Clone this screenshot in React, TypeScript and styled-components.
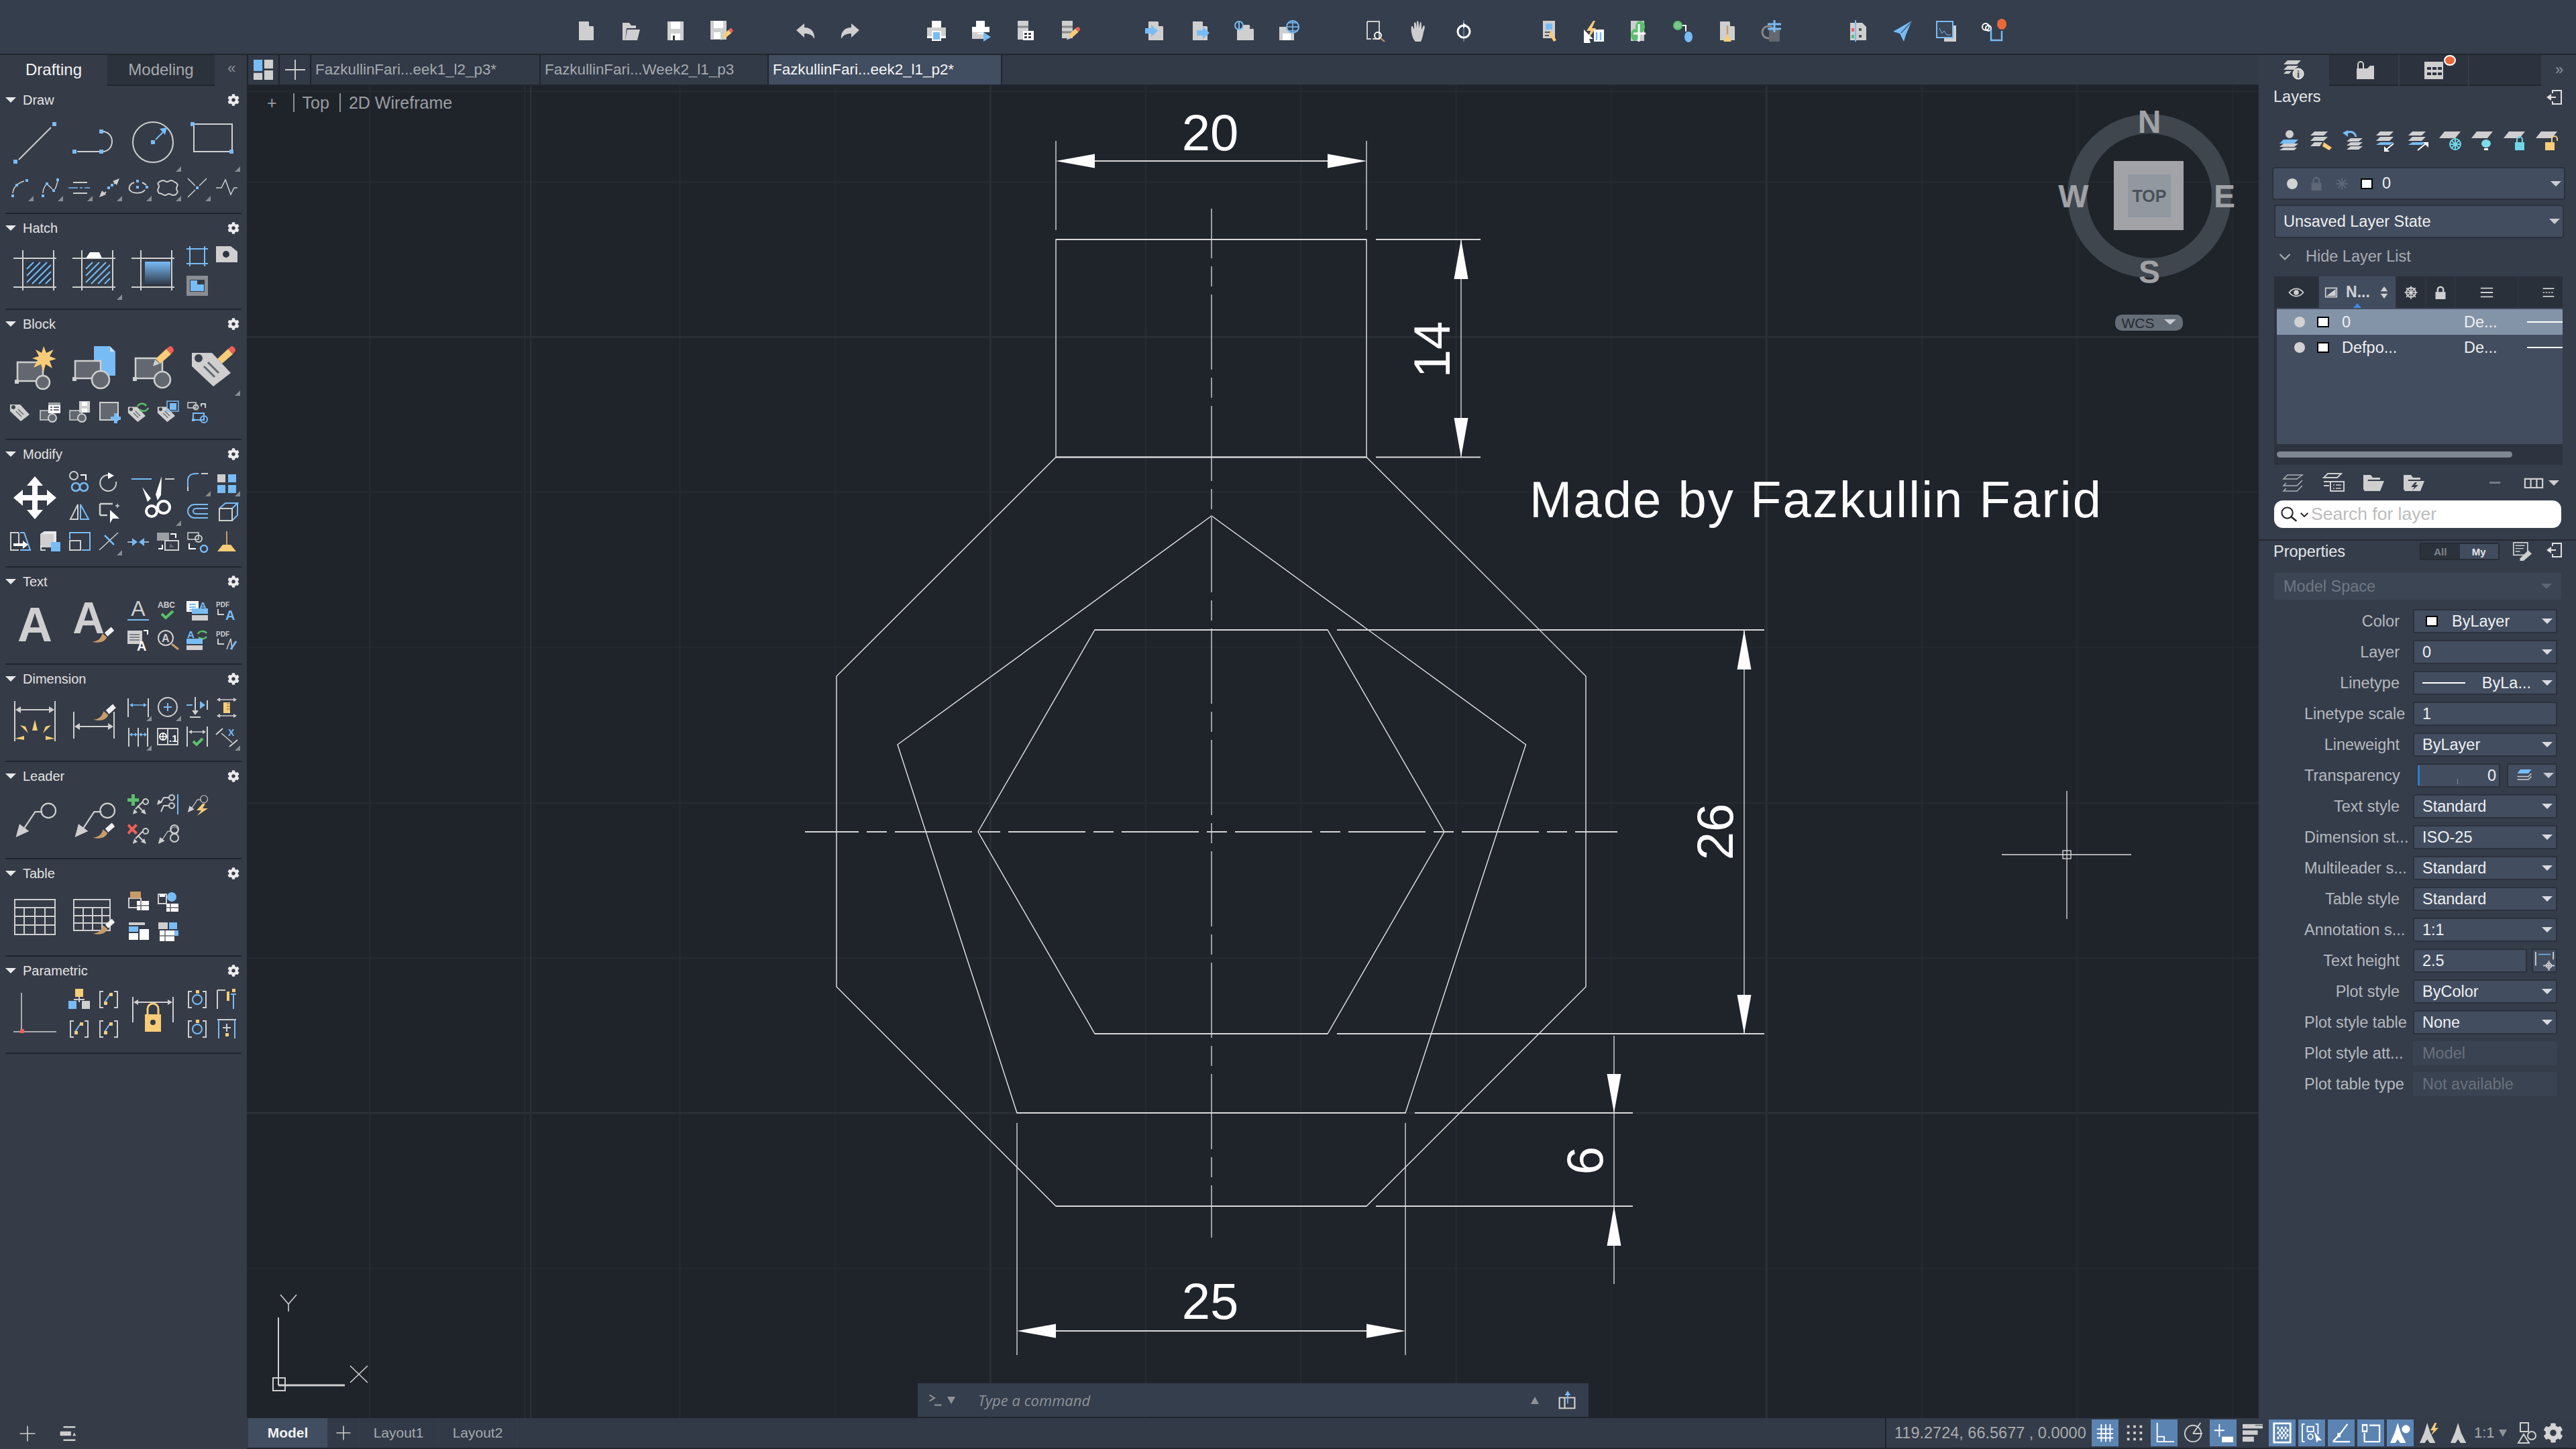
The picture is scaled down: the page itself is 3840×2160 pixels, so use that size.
import React from 'react';
import styled, { createGlobalStyle } from 'styled-components';
import { FaCog } from 'react-icons/fa';

const GR = '#cfcfcf';
const BL = '#78bcf5';
const OR = '#f8cc78';
const RD = '#ee5f58';
const GN = '#5ac06c';
const WH = '#ffffff';
const DK = '#636870';
const BR = '#c89c68';

const Ln = (d: string, c = GR, w = 2) => <path d={d} fill="none" stroke={c} strokeWidth={w} />;
const Fi = (d: string, c = GR) => <path d={d} fill={c} />;
const Bx = (x: number, y: number, w: number, h: number, c = GR) => <rect x={x} y={y} width={w} height={h} fill={c} />;
const Rg = (cx: number, cy: number, r: number, c = GR, w = 2, f = 'none') => (
  <circle cx={cx} cy={cy} r={r} stroke={c} strokeWidth={w} fill={f} />
);
const Tx = (x: number, y: number, s: string, size: number, c = GR) => (
  <text x={x} y={y} fontSize={size} fontWeight={700} fill={c} fontFamily="Liberation Sans, sans-serif">
    {s}
  </text>
);
const Brush = (x = 0, y = 0, k = 1) => (
  <g transform={`translate(${x} ${y}) scale(${k})`}>
    {Fi('M2 24C10 24 14 20 16 13L22 18C20 24 12 27 2 24Z', BR)}
    {Fi('M19 12L28 4L32 9L23 17Z', '#f0f0f0')}
  </g>
);
const Pencil = (x = 0, y = 0, k = 1) => (
  <g transform={`translate(${x} ${y}) scale(${k})`}>
    {Fi('M0 30L3 20L10 26Z', GR)}
    {Fi('M4 19L20 4L27 12L11 26Z', OR)}
    {Fi('M20 4L25 0C29 0 31 4 31 7L27 12Z', RD)}
  </g>
);
const Tag = (k = 1, x = 0, y = 0) => (
  <g transform={`translate(${x} ${y}) scale(${k})`}>
    {Fi('M1 5H16L30 20L17 30L1 15Z')}
    {Rg(6, 9, 2, '#3a414d', 2, '#3a414d')}
    {Ln('M10 15L18 23M13 12L21 20', DK, 1.5)}
  </g>
);
const Lead = (k = 1, x = 0, y = 0, c = GR) => (
  <g transform={`translate(${x} ${y}) scale(${k})`}>
    {Ln('M8 24L18 9H24', c, 1.2)}
    <circle cx="29" cy="8" r="6" stroke={c} strokeWidth="1.2" fill="none" />
    {Fi('M2 30L5 19L13 25Z', c)}
  </g>
);
const Doc = () => Fi('M5 2H19L27 10V30H5Z');
const DocFold = () => (
  <>
    {Doc()}
    {Fi('M20 2L27 9H20Z', '#353e4c')}
  </>
);

const ribbon: Record<string, React.ReactNode> = {
  line: <>{Ln('M8 56L56 8')}{Bx(0, 56, 6, 6, BL)}{Bx(58, 0, 6, 6, BL)}</>,
  pline: <>{Ln('M7 44H40M44 14C64 14 64 44 44 44')}{Bx(0, 41, 6, 6, BL)}{Bx(40, 41, 6, 6, BL)}{Bx(40, 11, 6, 6, BL)}</>,
  circle: <>{Rg(32, 30, 30)}{Bx(29, 27, 6, 6, BL)}{Ln('M36 26L50 12', BL)}{Fi('M42 10L53 8L50 19Z', BL)}</>,
  rect: <>{Ln('M5 3H62V44H5V5')}{Bx(0, 0, 6, 6, BL)}{Bx(58, 41, 6, 6, BL)}</>,
  arc: <>{Ln('M5 24C6 15 12 9 22 6', GR, 1.5)}{Bx(3, 26, 4, 4, BL)}{Bx(9, 10, 4, 4, BL)}{Bx(24, 3, 4, 4, BL)}</>,
  spline: <>{Ln('M6 24C6 18 8 14 12 10L20 18M24 18C26 14 27 10 28 6', GR, 1.5)}{Bx(4, 26, 4, 4, BL)}{Bx(10, 8, 4, 4, BL)}{Bx(20, 18, 4, 4, BL)}{Bx(26, 2, 4, 4, BL)}</>,
  xline: <>{Ln('M7 8H28M7 24H28', GR, 2)}{Ln('M0 16H14M17 16H21M24 16H32', BL, 1.5)}</>,
  ray: <>{Ln('M8 26L12 22M24 10L28 6', GR, 2)}{Fi('M2 30L6 20L12 26Z')}{Fi('M22 6L32 2L28 12Z')}{Bx(14, 14, 4, 4, BL)}{Bx(19, 10, 4, 4, BL)}</>,
  ellipse: <>{Ln('M10 8C3 10 1 17 4 20C8 25 22 25 26 19', GR, 2)}{Ln('M22 8C24 9 26 10 28 12', GR, 2)}{Bx(13, 4, 4, 4, BL)}{Bx(13, 13, 4, 4, BL)}{Bx(27, 13, 4, 4, BL)}</>,
  cloud: <path d="M6 6Q9 4 12 6T18 6T24 6T28 8Q32 11 30 14T30 20T28 26Q24 28 21 26T15 26T9 26T3 24Q0 20 2 17T2 11T6 6Z" fill="none" stroke={GR} strokeWidth="2" />,
  xpt: <>{Ln('M2 2L13 13M30 2L19 13M13 19L2 30', GR, 1.5)}{Bx(14, 14, 4, 4, BL)}</>,
  zig: <>{Ln('M0 16H8L14 4L22 26L27 16H32', GR, 1.5)}</>,
  hatch: <>{Ln('M14 0V60M60 0V60M0 12H64M0 55H64', GR, 2)}{Bx(20, 18, 36, 32, '#2b3645')}{Ln('M20 28L30 18M20 38L40 18M20 48L50 18M28 50L56 22M38 50L56 32M48 50L56 42', BL, 2)}</>,
  hatchEdit: <>{Ln('M14 0V60M60 0V60M0 12H64M0 55H64', GR, 2)}{Ln('M20 28L30 18M20 38L40 18M20 48L50 18M28 50L56 22M38 50L56 32M48 50L56 42', BL, 2)}{Fi('M20 12L26 3H40L44 12Z', WH)}</>,
  gradient: <>{Ln('M14 0V60M60 0V60M0 12H64M0 55H64', GR, 2)}<rect x="20" y="17" width="38" height="36" fill="url(#hatchGrad)" /></>,
  boundary: <>{Ln('M5 0V30M27 0V30M0 4H32M0 26H32', BL, 2)}</>,
  note: <>{Fi('M0 0H22L32 8V24H0Z')}{Rg(15, 12, 4, '#2e3440', 2, '#2e3440')}</>,
  region: <>{Bx(0, 0, 32, 30, '#8a8d92')}{Bx(5, 6, 22, 18, '#353c48')}{Fi('M6 7H16V13H26V23H6Z', BL)}</>,
  blkNew: <>{Fi('M6 24H44V52H6Z', DK)}{Ln('M6 24H44V52H6Z', GR, 2.5)}{Rg(44, 54, 10, GR, 2.5, DK)}{Bx(2, 50, 6, 6)}{Fi('M45 0L49 10L60 5L54 15L64 19L54 22L58 33L48 27L45 38L41 27L30 32L36 21L28 18L38 15L33 5L42 10Z', OR)}</>,
  blkIns: <>{Fi('M32 0H56L64 8V44H48L32 26Z', BL)}{Fi('M56 1L63 8H56Z', '#c9e2f8')}{Fi('M4 22H42V48H4Z', DK)}{Ln('M4 22H42V48H4Z', GR, 2.5)}{Rg(42, 50, 13, GR, 2.5, DK)}{Bx(0, 46, 6, 6)}</>,
  blkEdit: <>{Fi('M6 18H46V48H6Z', DK)}{Ln('M6 18H46V48H6Z', GR, 2.5)}{Rg(46, 50, 12, GR, 2.5, DK)}{Bx(2, 46, 6, 6)}{Pencil(32, 0)}</>,
  tagEdit: <>{Tag(2, 0, 0)}{Pencil(36, 0)}</>,
  tag: Tag(1, 0, 0),
  blkAttr: <>{Fi('M2 14H20V28H2Z', DK)}{Ln('M2 14H20V28H2Z', GR, 1.5)}{Rg(20, 25, 6, GR, 2, DK)}{Fi('M14 2H32V18H14Z', WH)}{Bx(14, 2, 18, 4, '#9fa3a8')}{Bx(17, 8, 3, 2, DK)}{Bx(22, 8, 8, 2, DK)}{Bx(17, 12, 3, 2, DK)}{Bx(22, 12, 8, 2, DK)}</>,
  blkSave: <>{Fi('M2 14H20V28H2Z', DK)}{Ln('M2 14H20V28H2Z', GR, 1.5)}{Rg(20, 25, 6, GR, 2, DK)}{Fi('M16 0H32V17H16Z')}{Bx(20, 1, 8, 6, WH)}{Bx(20, 11, 8, 6, WH)}</>,
  addRect: <>{Fi('M3 2H30V28H3Z', DK)}{Ln('M3 2H30V28H3Z', GR, 2)}{Fi('M24 18H29V23H34V28H29V33H24V28H19V23H24Z', BL)}</>,
  tagSync: <>{Tag(0.9, 0, 4)}{Ln('M15 8C17 3 25 2 28 7M31 10C28 16 21 16 18 12', GN, 2.5)}</>,
  tagGroup: <>{Tag(0.9, 0, 4)}{Bx(19, 3, 10, 10, BL)}{Ln('M15 0H32V15H15Z', BL, 1.5)}</>,
  blkRep: <>{Ln('M2 2H14V10H2Z', GR, 1.5)}{Rg(14, 9, 3.5)}{Ln('M22 8V4H28V10', WH, 1.5)}{Ln('M10 18H26V28H10Z', BL, 2)}{Rg(26, 27, 5, BL)}{Bx(8, 26, 4, 4, BL)}</>,
  move: <>{Fi('M32 0L44 14H36V28H50V20L64 32L50 44V36H36V50H44L32 64L20 50H28V36H14V44L0 32L14 20V28H28V14H20Z', WH)}</>,
  copy: <>{Rg(8, 5, 6)}{Ln('M18 4H26V12', WH, 2)}{Rg(11, 22, 6, BL, 2.5)}{Rg(23, 22, 6, BL, 2.5)}</>,
  rotate: <>{Ln('M16 4A12 12 0 1 0 27 14', GR, 2)}{Fi('M15 0L24 5L15 10Z', WH)}</>,
  trim: <>{Ln('M0 4H30', BL, 2)}{Ln('M50 4H64', GR, 2)}{Fi('M16 16L29 33L24 38Z', WH)}{Fi('M45 0L44 28L39 36L36 27Z', WH)}{Rg(30, 52, 8, WH, 4)}{Rg(48, 46, 9, WH, 4)}</>,
  fillet: <>{Ln('M2 28V12C2 6 6 2 14 2H18', BL, 2)}{Ln('M22 2H32', GR, 2)}{Ln('M2 22V28', GR, 2)}</>,
  array: <>{Bx(2, 3, 12, 12)}{Bx(18, 3, 12, 12, BL)}{Bx(2, 19, 12, 12, BL)}{Bx(18, 19, 12, 12, BL)}</>,
  mirror: <>{Ln('M14 4L3 26H14Z')}{Ln('M18 4L30 26H18Z', BL)}</>,
  selStretch: <>{Ln('M3 3H22M3 3V20M3 20H14', GR, 2.5)}{Fi('M18 12L32 25L22 25L18 32Z', WH)}{Ln('M26 6H32M29 3V9', GR, 1.5)}</>,
  offset: <>{Ln('M32 4H12A8 8 0 0 0 12 24H32', BL, 2)}{Ln('M32 10H14A3 3 0 0 0 14 18H32', BL, 2)}</>,
  box3d: <>{Ln('M5 10H24V28H5ZM5 10L14 2H32L24 10M32 2V20L24 28', BL, 2)}{Ln('M5 10H24V28H5Z', GR, 2)}</>,
  stretch: <>{Ln('M14 2H2V28H14M14 2V18', GR, 2)}{Fi('M6 18H20V14L28 20L20 26V22H6Z', WH)}{Ln('M16 2H22L31 28H16', BL, 2)}</>,
  alignCube: <>{Fi('M2 4H22V24H2Z')}{Fi('M2 4L8 0H26V16L22 24V4Z', '#e8e8e8')}{Bx(18, 16, 14, 14, BL)}{Ln('M3 22V28H10', WH, 1.5)}</>,
  scale: <>{Ln('M2 12V2H32V28H20', BL, 2)}{Ln('M2 14H18V28H2Z')}</>,
  breakline: <>{Ln('M2 28L30 2', GR, 1.5)}{Ln('M10 6L24 20', BL, 2.5)}</>,
  join: <>{Ln('M0 16H9M23 16H32', GR, 1.5)}{Fi('M7 10L15 16L7 22Z', BL)}{Fi('M25 10L17 16L25 22Z', BL)}{Ln('M4 16H10M22 16H28', BL, 2)}</>,
  replace: <>{Bx(0, 2, 18, 12, '#9b9ea3')}{Ln('M20 4H28V10', WH, 2)}{Ln('M12 14H32V28H12Z', GR, 2)}{Fi('M18 24L26 24L20 18Z', DK)}{Ln('M2 26H8V20', WH, 2)}</>,
  match: <>{Ln('M2 2H18V12H2Z', GR, 1.5)}{Rg(18, 11, 5, GR, 2)}{Ln('M4 18V26H14', WH, 2)}{Rg(26, 26, 5, BL, 2.5)}</>,
  broom: <>{Bx(15, 0, 2, 20, BR)}{Fi('M10 20H22L30 30H2Z', OR)}</>,
  bigA: <text x="32" y="56" textAnchor="middle" fontSize="72" fontWeight="700" fill={GR} fontFamily="Liberation Sans, sans-serif">A</text>,
  brushA: <>{<text x="24" y="44" textAnchor="middle" fontSize="66" fontWeight="700" fill={GR} fontFamily="Liberation Sans, sans-serif">A</text>}{Brush(27, 30, 1.1)}</>,
  underA: <>{<text x="16" y="24" textAnchor="middle" fontSize="32" fill={GR} fontFamily="Liberation Sans, sans-serif">A</text>}{Bx(0, 29, 32, 2, BL)}</>,
  abc: <>{Tx(1, 12, 'ABC', 12)}{Ln('M7 21L13 27L24 17', GN, 4)}</>,
  listA: <>{Bx(0, 2, 18, 16, WH)}{Ln('M4 7H14M4 11H14M4 15H14', BL, 2)}{Tx(19, 14, 'A', 15, BL)}{Bx(8, 13, 24, 8, BL)}{Bx(8, 23, 24, 8)}</>,
  pdfA: <>{Tx(0, 11, 'PDF', 10)}{Ln('M3 14V22H12', WH, 1.5)}{Tx(14, 30, 'A', 20, BL)}</>,
  textA: <>{Bx(0, 2, 22, 20)}{Ln('M3 8H18M3 12H18M3 16H18', DK, 1.5)}{Ln('M24 2H30V8', WH, 2)}{Tx(14, 32, 'A', 20, WH)}</>,
  findA: <>{Rg(13, 13, 11)}{Tx(7, 19, 'A', 16)}{Ln('M22 22L32 30', BR, 3)}</>,
  syncA: <>{Tx(1, 13, 'A', 15, BL)}{Ln('M17 7C19 2 27 2 30 6M30 11C27 15 22 15 18 12', GN, 2.5)}{Bx(0, 14, 24, 8, BL)}{Bx(0, 24, 24, 7)}</>,
  pdfTool: <>{Tx(0, 11, 'PDF', 10)}{Ln('M3 14V22H12', WH, 1.5)}{Ln('M16 30L22 14L24 30', GR, 1.5)}{Ln('M22 30L30 18', BL, 3)}</>,
  dimNew: <>{Ln('M2 0V60M62 0V60', GR, 2)}{Ln('M8 13H56', GR, 2)}{Fi('M3 13L11 8V18Z')}{Fi('M61 13L53 8V18Z')}{Fi('M28 44L32 28L36 44Z', OR)}{Fi('M10 36L18 38L22 48Z', OR)}{Fi('M44 48L48 38L56 36Z', OR)}{Fi('M2 56L16 52V58Z', OR)}{Fi('M62 56L48 52V58Z', OR)}</>,
  dimBrush: <>{Ln('M2 16V56M62 16V56', GR, 2)}{Ln('M8 38H56', GR, 2)}{Fi('M3 38L11 33V43Z')}{Fi('M61 38L53 33V43Z')}{Brush(28, 0, 1.15)}</>,
  dimLin: <>{Ln('M1 2V30M31 2V30', GR, 2)}{Ln('M5 12H27', BL, 1.5)}{Fi('M3 12L8 9V15Z', BL)}{Fi('M29 12L24 9V15Z', BL)}</>,
  dimRad: <>{Rg(16, 15, 14)}{Ln('M10 15H22M16 9V21', BL, 2)}</>,
  dimBase: <>{Ln('M0 12H9M20 12H26', BL, 2)}{Fi('M20 6L28 12L20 18Z', BL)}{Ln('M31 5V19', GR, 2)}{Ln('M13 0V20M5 30H21', GR, 2)}{Fi('M8 20H18L13 27Z')}</>,
  dimRuler: <>{Ln('M3 4H29M3 28H29', GR, 1.5)}{Fi('M1 4L6 1V7ZM31 4L26 1V7ZM1 28L6 25V31ZM31 28L26 25V31Z')}{Bx(11, 8, 10, 16, OR)}{Ln('M16 10H21M16 14H21M16 18H21', '#8a6a30', 1)}</>,
  dimCont: <>{Ln('M2 2V30M16 2V30M30 2V30', GR, 2)}{Ln('M5 12H13M19 12H27', BL, 1.5)}{Fi('M3 12L7 9V15ZM15 12L11 9V15ZM17 12L21 9V15ZM29 12L25 9V15Z', BL)}</>,
  tolerance: <>{Ln('M1 3H31V27H1ZM16 3V27', GR, 2)}{Rg(9, 15, 5, WH, 2)}{Ln('M3 15H15M9 9V21', WH, 1.5)}{Tx(18, 23, '.1', 15, WH)}</>,
  dimChk: <>{Ln('M1 0V30M31 0V30', GR, 2)}{Ln('M5 8H27', GR, 1.5)}{Fi('M3 8L8 5V11ZM29 8L24 5V11Z')}{Ln('M10 22L15 27L24 18', GN, 4)}</>,
  dimX: <>{Ln('M0 12L10 3M20 30L32 20', GR, 2)}{Ln('M8 10L24 24', GR, 1.5)}{Tx(18, 14, 'X', 14, BL)}</>,
  lead: Lead(1.8, 0, 4),
  leadBrush: <>{Lead(1.8, 0, 4)}{Brush(28, 32, 1.1)}</>,
  leadAdd: <>{Fi('M6 0H11V6H17V11H11V17H6V11H0V6H6Z', GN)}{Ln('M16 18L22 12H24', GR, 2)}{Rg(27, 11, 4)}{Ln('M12 22L16 18L24 26', GR, 2)}{Fi('M8 30L10 22L15 27Z')}{Fi('M28 30L20 27L25 22Z')}</>,
  leadDel: <>{Fi('M2 0L7 5L12 0L15 3L10 8L15 13L12 16L7 11L2 16L0 13L4 8L0 3Z', RD)}{Ln('M16 18L22 12H24', GR, 2)}{Rg(27, 11, 4)}{Ln('M12 22L16 18L24 26', GR, 2)}{Fi('M8 30L10 22L15 27Z')}{Fi('M28 30L20 27L25 22Z')}</>,
  leadAlign: <>{Ln('M6 12L10 5H18M6 26L10 17H18', GR, 2)}{Rg(22, 5, 4)}{Rg(22, 17, 4)}{Ln('M31 0V30', BL, 2)}{Fi('M0 16L2 8L8 12Z')}</>,
  leadBolt: <>{Lead(0.9, 0, 0)}{Fi('M24 14L15 24H22L16 32L32 21H24L28 14Z', OR)}</>,
  leadCol: <>{Lead(0.9, 0, 3)}{Rg(26, 8, 6)}{Rg(26, 21, 6)}</>,
  table: <>{Ln('M2 6H62V58H2ZM2 18H62M2 31H62M2 44H62M16 18V58M32 18V58M47 18V58', GR, 2)}</>,
  tableBrush: <>{Ln('M2 6H56V52H2ZM2 18H56M2 30H56M2 41H56M16 18V52M30 18V52M44 18V52', GR, 2)}{Brush(28, 30, 1.1)}</>,
  dataExt: <>{Ln('M2 10H20V24H2Z', GR, 2)}{Bx(4, 0, 16, 10, BR)}{Fi('M14 14H32V28H14Z', WH)}{Ln('M20 14V28M14 21H32', DK, 1.5)}</>,
  dataLink: <>{Rg(22, 8, 6, BL, 2, BL)}{Ln('M2 4H14V18H2Z', GR, 2)}{Bx(4, 4, 8, 4, WH)}{Fi('M14 18H32V30H14Z', WH)}{Ln('M20 18V30M14 24H32', DK, 1.5)}</>,
  dataOut: <>{Bx(2, 2, 24, 4, GR)}{Bx(2, 8, 14, 8, BL)}{Bx(2, 18, 14, 10, WH)}{Bx(18, 12, 14, 16, WH)}</>,
  dataIn: <>{Bx(2, 2, 14, 10, GR)}{Bx(18, 2, 12, 10, BL)}{Fi('M4 14H26V30H4Z', WH)}{Ln('M12 14V30M4 22H26', DK, 1.5)}{Bx(26, 14, 6, 8, BL)}</>,
  paramLine: <>{Ln('M12 0V56M0 58H64', GR, 1.5)}{Fi('M10 54H16V60H10Z', RD)}</>,
  paramFlow: <>{Bx(10, 0, 12, 12, OR)}{Ln('M8 16H24M16 12V20', GR, 2)}{Bx(0, 18, 12, 12, BL)}{Bx(20, 18, 12, 12, GR)}</>,
  paramBracket: <>{Ln('M8 4H3V28H8M24 4H29V28H24', GR, 2)}{Ln('M10 20L18 8', BL, 2)}{Bx(9, 19, 5, 5, OR)}{Bx(17, 6, 5, 5, OR)}</>,
  paramDim: <>{Ln('M2 6V44M62 6V44', GR, 2)}{Ln('M6 14H58', GR, 2)}{Fi('M3 14L10 10V18ZM61 14L54 10V18Z')}{Fi('M20 32H44V58H20Z', OR)}{Ln('M24 32V24A8 8 0 0 1 40 24V32', OR, 3)}{Rg(32, 44, 3, '#353c48', 2, '#353c48')}</>,
  paramCircle: <>{Ln('M8 4H3V28H8M24 4H29V28H24', GR, 2)}{Rg(16, 16, 7, BL, 2)}{Bx(14, 2, 5, 5, OR)}</>,
  paramPeg: <>{Ln('M2 2H14M2 2V30', GR, 2)}{Bx(16, 4, 4, 14, OR)}{Ln('M22 8H30M26 8V30', BL, 2)}{Bx(24, 0, 5, 5, OR)}</>,
  paramPeg2: <>{Ln('M2 2H30', GR, 2)}{Ln('M4 2V30M28 2V30', BL, 2)}{Ln('M10 14H22M16 8V20', GR, 2)}{Bx(14, 22, 5, 5, OR)}</>,
};

const LG = 'lg';
const FLY = 'fly';
const sections = [
  { title: 'Draw', pad: 15, items: [['line', LG], ['pline', LG], ['circle', LG, FLY], ['rect', LG, FLY], ['arc', FLY], ['spline', FLY], ['xline', FLY], ['ray', FLY], ['ellipse', FLY], ['cloud', FLY], ['xpt', FLY], ['zig']] },
  { title: 'Hatch', pad: 11, items: [['hatch', LG], ['hatchEdit', LG, FLY], ['gradient', LG], ['boundary'], ['note'], ['region']] },
  { title: 'Block', pad: 18, items: [['blkNew', LG], ['blkIns', LG], ['blkEdit', LG], ['tagEdit', LG, FLY], ['tag'], ['blkAttr'], ['blkSave'], ['addRect'], ['tagSync'], ['tagGroup'], ['blkRep']] },
  { title: 'Modify', pad: 14, items: [['move', LG], ['copy'], ['rotate'], ['trim', LG, FLY], ['fillet', FLY], ['array', FLY], ['mirror'], ['selStretch'], ['offset'], ['box3d'], ['stretch'], ['alignCube'], ['scale'], ['breakline', FLY], ['join'], ['replace'], ['match'], ['broom']] },
  { title: 'Text', pad: 13, items: [['bigA', LG], ['brushA', LG], ['underA'], ['abc'], ['listA'], ['pdfA'], ['textA'], ['findA'], ['syncA'], ['pdfTool']] },
  { title: 'Dimension', pad: 13, items: [['dimNew', LG], ['dimBrush', LG], ['dimLin', FLY], ['dimRad', FLY], ['dimBase'], ['dimRuler'], ['dimCont', FLY], ['tolerance'], ['dimChk'], ['dimX', FLY]] },
  { title: 'Leader', pad: 13, items: [['lead', LG], ['leadBrush', LG], ['leadAdd'], ['leadAlign'], ['leadBolt'], ['blank'], ['leadDel'], ['leadCol']] },
  { title: 'Table', pad: 13, items: [['table', LG], ['tableBrush', LG], ['dataExt'], ['dataLink'], ['blank'], ['blank'], ['dataOut'], ['dataIn']] },
  { title: 'Parametric', pad: 13, items: [['paramLine', LG], ['paramFlow'], ['paramBracket'], ['paramDim', LG], ['paramCircle'], ['paramPeg'], ['paramBracket'], ['paramBracket'], ['paramCircle'], ['paramPeg2']] },
];

const top: React.ReactNode[][] = [
  [
    <>{DocFold()}</>,
    <>{Fi('M4 4H14L17 8H24V12H10L8 30H4Z')}{Fi('M11 14H30L26 30H8Z')}</>,
    <>{Bx(5, 2, 24, 28)}{Bx(10, 2, 14, 11, WH)}{Bx(10, 20, 14, 10, WH)}{Bx(13, 23, 3, 7, '#333')}</>,
    <>{Bx(3, 1, 24, 28)}{Bx(8, 1, 14, 11, WH)}{Bx(8, 18, 10, 10, WH)}{Pencil(18, 12, 0.6)}</>,
  ],
  [
    <>{Fi('M14 5V11C24 11 30 18 29 28C26 22 21 20 14 20V26L2 15Z')}</>,
    <>{Fi('M18 5V11C8 11 2 18 3 28C6 22 11 20 18 20V26L30 15Z')}</>,
  ],
  [
    <>{Bx(9, 1, 14, 10, WH)}{Bx(2, 11, 28, 13)}{Bx(2, 24, 28, 3, WH)}{Bx(9, 16, 14, 15, WH)}{Bx(11, 18, 10, 11, BL)}</>,
    <>{Bx(9, 1, 13, 9, WH)}{Bx(3, 10, 26, 8, WH)}{Bx(3, 18, 18, 10)}{Ln('M11 20H21V30', WH, 2)}{Fi('M20 18L31 25L20 32Z', BL)}</>,
    <>{Bx(5, 1, 16, 28)}{Ln('M5 10H21', '#888', 3)}{Bx(13, 16, 16, 14, WH)}{Bx(15, 19, 4, 3, '#444')}{Bx(21, 19, 4, 3, '#444')}{Bx(15, 24, 4, 3, '#444')}{Bx(21, 24, 4, 3, '#444')}</>,
    <>{Bx(5, 1, 16, 26)}{Ln('M5 10H21M5 18H21', '#888', 3)}{Pencil(12, 10, 0.65)}</>,
  ],
  [
    <>{DocFold()}{Fi('M0 12H9V7L19 16L9 25V20H0Z', BL)}</>,
    <>{DocFold()}{Fi('M11 15H20V10L30 19L20 28V23H11Z', BL)}</>,
    <>{Fi('M5 7H23L30 14V30H5Z')}{Fi('M24 8L29 13H24Z', '#353e4c')}{Rg(8, 8, 6, BL, 2, '#353e4c')}{Ln('M8 2V14', BL, 2)}</>,
    <>{Bx(2, 10, 22, 20)}{Bx(7, 20, 12, 10, WH)}{Rg(22, 10, 9, BL, 2, '#353e4c')}{Ln('M22 1V19M13 10H31M16 4H28M16 16H28', BL, 1.5)}</>,
  ],
  [
    <>{Ln('M4 2H22V28H12M4 2V28H10', GR, 2)}{Rg(20, 23, 5, WH, 2)}{Ln('M24 27L30 32', BR, 2)}</>,
    <>{Fi('M6 26C4 20 3 14 4 9C6 8 7 12 8 14V4C10 2 11 4 12 12V2C14 0 15 2 15 12L17 3C19 2 19 6 19 14L22 8C25 8 24 12 22 18C21 24 20 28 18 32H10C8 30 7 28 6 26Z', '#cdcdcd')}</>,
    <>{Ln('M16 0V32', BL, 1)}{Rg(16, 17, 9, WH, 3)}{Fi('M15 4L21 8L15 12Z', WH)}</>,
  ],
  [
    <>{Bx(5, 1, 18, 26)}{Bx(9, 5, 10, 9, BL)}{Ln('M8 18H18M8 23H14', '#555', 2)}{Fi('M17 16L25 30L21 32L14 20Z', OR)}</>,
    <>{Fi('M14 1L4 16H10L5 30L18 12H12L17 1Z', OR)}{Fi('M0 14L14 28H8L10 34L0 34Z', WH)}{Bx(15, 14, 15, 18, WH)}{Ln('M19 18V30M25 18V30', BL, 2.5)}</>,
    <>{Bx(4, 1, 20, 30)}<ellipse cx="18" cy="10" rx="7" ry="9" fill={GN} /><ellipse cx="10" cy="22" rx="6" ry="9" fill={GN} />{Ln('M16 6V32M8 20H26', WH, 3)}</>,
    <>{Rg(8, 8, 6, GN, 2, '#7bc88a')}{Ln('M15 8H20V17', WH, 2)}<ellipse cx="24" cy="25" rx="6" ry="8" fill={BL} /></>,
    <>{DocFold()}{Ln('M16 8V22', BR, 2.5)}{Fi('M10 32L16 20L22 32Z', OR)}</>,
    <>{Rg(11, 18, 9, '#888', 3)}{Bx(12, 12, 16, 20, DK)}{Ln('M20 0V18M10 6H30M10 13H30', BL, 3)}</>,
  ],
  [
    <>{Fi('M4 4H22L28 10V30H4Z')}{Ln('M12 0V32', BL, 2)}{Bx(6, 12, 4, 5, RD)}{Bx(6, 22, 4, 5, GN)}{Bx(17, 12, 4, 4, '#555')}{Bx(17, 22, 4, 4, '#555')}</>,
    <>{Fi('M30 1L2 17L12 20L18 32L21 22Z', BL)}{Ln('M30 2L14 19', '#3b5e80', 1.5)}</>,
    <>{Bx(12, 8, 18, 24)}{Bx(1, 2, 24, 24, '#3b4656')}{Ln('M1 2H25V26H1Z', BL, 2)}{Ln('M5 12L9 20L12 16L16 22L22 22', BL, 1)}</>,
    <>{Rg(8, 10, 5, WH, 2)}{Rg(12, 12, 4, WH, 2)}{Ln('M16 14V30H32V16', BL, 2.5)}<ellipse cx="32" cy="6" rx="7" ry="8" fill="#e8693c" /></>,
  ],
];

const layerIcons: React.ReactNode[] = [
  <>{Rg(17, 6, 5, GR, 2, GR)}{Fi('M8 14H30L24 20H2Z', BL)}{Fi('M8 20H30L24 25H2Z', GR)}{Fi('M8 26H28L24 30H2Z', GR)}</>,
  <>{Fi('M6 2H26L20 8H0Z')}{Fi('M6 10H26L20 16H0Z')}{Fi('M6 18H18L14 24H0Z')}{Fi('M20 18L32 26L28 30L18 24Z', OR)}</>,
  <>{Ln('M4 6C10 0 18 2 20 10', BL, 3)}{Fi('M0 4L8 0V10Z', BL)}{Fi('M12 12H30L24 17H6Z')}{Fi('M12 18H30L24 23H6Z')}{Fi('M12 24H30L24 29H6Z')}</>,
  <>{Fi('M8 2H28L22 8H2Z')}{Fi('M8 10H28L22 16H2Z')}{Fi('M8 18H28L22 22H2Z', BL)}{Ln('M28 20L16 30', WH, 2)}{Fi('M14 24L14 32L22 32Z', WH)}</>,
  <>{Fi('M8 2H28L22 8H2Z')}{Fi('M8 10H28L22 16H2Z')}{Fi('M8 18H28L22 22H2Z', BL)}{Ln('M16 30L28 20', WH, 2)}{Fi('M24 18H32V26Z', WH)}</>,
  <>{Fi('M8 2H32L24 12H0Z')}{Rg(24, 21, 8, '#6fd6e8', 2)}{Ln('M16 21H32M24 13V29M18 15L30 27M30 15L18 27', '#6fd6e8', 2)}</>,
  <>{Fi('M8 2H32L24 12H0Z')}<ellipse cx="22" cy="20" rx="7" ry="6" fill="#7fdcea" />{Bx(19, 27, 6, 3, WH)}</>,
  <>{Fi('M8 2H32L24 12H0Z')}{Bx(17, 18, 14, 12, '#6fd6e8')}{Ln('M20 18V14A4 4 0 0 1 28 14V18', '#6fd6e8', 2)}</>,
  <>{Fi('M8 2H32L24 12H0Z')}{Bx(14, 18, 14, 12, OR)}{Ln('M24 18V13A4 4 0 0 1 32 13V16', OR, 2)}</>,
];

const statusIcons: { on: boolean; el: React.ReactNode }[] = [
  { on: true, el: <>{Ln('M3 10H29M3 17H29M3 24H29M10 2V30M17 2V30M24 2V30', WH, 2)}</> },
  { on: false, el: <>{[6, 16, 26].map((x) => [6, 16, 26].map((y) => <rect key={`${x}${y}`} x={x - 2} y={y - 2} width="4" height="4" fill={GR} />))}</> },
  { on: true, el: <>{Ln('M5 0V30H32', WH, 2)}{Ln('M5 22H16V30', WH, 2)}</> },
  { on: false, el: <>{Rg(15, 17, 13, GR, 2)}{Ln('M15 17H30M15 17L27 0', GR, 2)}</> },
  { on: true, el: <>{Ln('M10 2V22M2 12H18', WH, 2)}{Bx(14, 22, 18, 9, WH)}</> },
  { on: false, el: <>{Bx(0, 2, 32, 7)}{Bx(0, 12, 24, 7)}{Bx(0, 22, 18, 8)}{Ln('M20 4H32M24 24H32', '#353e4c', 1)}</> },
  { on: true, el: <>{Ln('M3 1H29V31H3Z', WH, 3)}{[0, 1, 2, 3, 4].map((r) => [0, 1, 2].map((c) => <rect key={`${r}${c}`} x={8 + c * 6 + (r % 2) * 3} y={6 + r * 4} width="3" height="4" fill={WH} />))}</> },
  { on: true, el: <>{Ln('M5 2H1V30H5M22 2H26V18', WH, 2)}{Ln('M9 6H19V14H9Z', WH, 2)}{Rg(14, 22, 4, WH, 2)}{Fi('M20 14L32 28L26 28L24 32Z', WH)}</> },
  { on: true, el: <>{Ln('M3 30H30', WH, 2.5)}{Ln('M3 30L14 18L26 2', WH, 2.5)}{Bx(10, 16, 5, 7, WH)}</> },
  { on: true, el: <>{Ln('M14 4H30V30H6V16', WH, 2.5)}{Bx(2, 2, 9, 13, WH)}{Bx(4, 5, 5, 7, '#5b84b3')}</> },
  { on: true, el: <>{Fi('M12 0L17 16L25 32H16L12 26L8 32H0L7 16Z', WH)}{Rg(25, 10, 6, WH, 1, WH)}</> },
  { on: false, el: <>{Fi('M12 0L17 16L25 32H16L12 26L8 32H0L7 16Z')}{Fi('M24 0L17 12H22L18 20L30 8H24L27 0Z', OR)}</> },
  { on: false, el: <>{Fi('M14 0L19 16L27 32H18L14 26L10 32H2L9 16Z')}</> },
];

const layerRows = [
  { name: '0', selected: true },
  { name: 'Defpo...', selected: false },
];

const propertyRows: { label: string; long?: boolean; kind: string; value?: string }[] = [
  { label: 'Color', kind: 'color', value: 'ByLayer' },
  { label: 'Layer', kind: 'select', value: '0' },
  { label: 'Linetype', kind: 'linetype', value: 'ByLa...' },
  { label: 'Linetype scale', long: true, kind: 'input', value: '1' },
  { label: 'Lineweight', kind: 'select', value: 'ByLayer' },
  { label: 'Transparency', kind: 'transparency', value: '0' },
  { label: 'Text style', kind: 'select', value: 'Standard' },
  { label: 'Dimension st...', long: true, kind: 'select', value: 'ISO-25' },
  { label: 'Multileader s...', long: true, kind: 'select', value: 'Standard' },
  { label: 'Table style', kind: 'select', value: 'Standard' },
  { label: 'Annotation s...', long: true, kind: 'select', value: '1:1' },
  { label: 'Text height', kind: 'height', value: '2.5' },
  { label: 'Plot style', kind: 'select', value: 'ByColor' },
  { label: 'Plot style table', long: true, kind: 'select', value: 'None' },
  { label: 'Plot style att...', long: true, kind: 'disabled', value: 'Model' },
  { label: 'Plot table type', long: true, kind: 'disabled', value: 'Not available' },
];

const GlobalStyle = createGlobalStyle`
  html, body { margin: 0; padding: 0; background: #20252d; }
  body { font-family: "Liberation Sans", Arial, sans-serif; color: #e6e6e6; }
  * { box-sizing: border-box; }
`;

const Page = styled.div`
  width: 3840px;
  height: 2160px;
  display: flex;
  flex-direction: column;
  overflow: hidden;
  background: #20252d;
`;

const TopBar = styled.div`
  height: 82px;
  flex: none;
  display: flex;
  align-items: center;
  gap: 97px;
  padding: 12px 0 0 858px;
  background: #353e4c;
  border-bottom: 2px solid #21262d;
`;

const ToolGroup = styled.div`
  display: flex;
  gap: 34px;
`;

const Ico = styled.svg<{ $s?: number }>`
  width: ${(p) => p.$s || 32}px;
  height: ${(p) => p.$s || 32}px;
  display: block;
  overflow: visible;
  flex: none;
`;

const Body = styled.div`
  flex: 1;
  display: flex;
  min-height: 0;
`;

const LeftColumn = styled.aside`
  width: 368px;
  flex: none;
  display: flex;
  flex-direction: column;
  background: #353b47;
`;

const WorkspaceTabs = styled.div`
  height: 46px;
  flex: none;
  display: flex;
`;

const WorkspaceTab = styled.div<{ $active?: boolean }>`
  width: 160px;
  display: flex;
  align-items: center;
  justify-content: center;
  font-size: 24px;
  color: ${(p) => (p.$active ? '#f2f2f2' : '#a6a9ae')};
  background: ${(p) => (p.$active ? '#353b47' : '#2c323c')};
  border-bottom: 2px solid ${(p) => (p.$active ? '#353b47' : '#21262d')};
`;

const CollapseTab = styled.div`
  flex: 1;
  display: flex;
  align-items: center;
  justify-content: center;
  color: #8f949b;
  font-size: 22px;
  margin-left: 2px;
  padding-bottom: 4px;
  border-bottom: 2px solid #353b47;
`;

const RibbonSection = styled.section<{ $pad: number }>`
  padding-bottom: ${(p) => p.$pad}px;
  border-bottom: 2px solid #20252d;
  margin: 0 8px;
`;

const RibbonHead = styled.div`
  height: 42px;
  display: flex;
  align-items: center;
  font-size: 20px;
  color: #e2e2e2;
`;

const Caret = styled.span<{ $c?: string }>`
  width: 0;
  height: 0;
  border-left: 8px solid transparent;
  border-right: 8px solid transparent;
  border-top: 8px solid ${(p) => p.$c || '#e8e8e8'};
  flex: none;
`;

const RibbonTitle = styled.span`
  margin-left: 10px;
  flex: 1;
`;

const GearWrap = styled.span`
  display: flex;
  color: #ececec;
  font-size: 18px;
  margin-right: 3px;
`;

const RibbonGrid = styled.div`
  display: grid;
  grid-template-columns: repeat(8, 44px);
  grid-auto-rows: 44px;
  margin: 0 -8px 0 0;
`;

const ToolCell = styled.div<{ $lg?: boolean; $fly?: boolean }>`
  position: relative;
  display: flex;
  align-items: center;
  justify-content: center;
  grid-column: span ${(p) => (p.$lg ? 2 : 1)};
  grid-row: span ${(p) => (p.$lg ? 2 : 1)};
  &::after {
    content: ${(p) => (p.$fly ? "''" : 'none')};
    position: absolute;
    right: 2px;
    bottom: 2px;
    border-left: 8px solid transparent;
    border-bottom: 8px solid #8a8d92;
  }
`;

const LeftFooter = styled.div`
  margin-top: auto;
  height: 46px;
  display: flex;
  align-items: center;
  gap: 34px;
  padding: 0 0 0 28px;
`;

const Main = styled.div`
  flex: 1;
  min-width: 0;
  display: flex;
  flex-direction: column;
`;

const MainUpper = styled.div`
  flex: 1;
  display: flex;
  min-height: 0;
`;

const Center = styled.div`
  flex: 1;
  min-width: 0;
  display: flex;
  flex-direction: column;
`;

const DocTabs = styled.div`
  height: 46px;
  flex: none;
  display: flex;
  gap: 2px;
  padding-left: 2px;
  border-bottom: 2px solid #21262d;
  background: #20252d;
`;

const DocButton = styled.div`
  width: 45px;
  flex: none;
  display: flex;
  align-items: center;
  justify-content: center;
  background: #323a47;
`;

const DocTab = styled.div<{ $active?: boolean; $w?: number }>`
  width: ${(p) => (p.$w ? `${p.$w}px` : 'auto')};
  flex: ${(p) => (p.$w ? 'none' : 1)};
  display: flex;
  align-items: center;
  padding-left: 6px;
  white-space: nowrap;
  overflow: hidden;
  font-size: 22.4px;
  color: ${(p) => (p.$active ? '#f5f5f5' : '#a6aab0')};
  background: ${(p) => (p.$active ? '#414d60' : '#323a47')};
`;

const Canvas = styled.div`
  flex: 1;
  position: relative;
  overflow: hidden;
  background-color: #1f242b;
`;

const GridLayer = styled.div<{ $step: number; $x: number; $y: number; $c: string }>`
  position: absolute;
  inset: 0;
  background-image:
    repeating-linear-gradient(to right, ${(p) => p.$c} 0 2px, transparent 2px ${(p) => p.$step}px),
    repeating-linear-gradient(to bottom, ${(p) => p.$c} 0 2px, transparent 2px ${(p) => p.$step}px);
  background-position: ${(p) => p.$x}px 0, 0 ${(p) => p.$y}px;
`;

const DrawingSvg = styled.svg`
  position: absolute;
  inset: 0;
  width: 100%;
  height: 100%;
`;

const ViewLabel = styled.div`
  position: absolute;
  left: 30px;
  top: 11px;
  height: 28px;
  display: flex;
  align-items: center;
  font-size: 25px;
  color: #9a9da1;
`;

const ViewItem = styled.span<{ $bar?: boolean }>`
  padding: 0 ${(p) => (p.$bar ? 15 : 24)}px 0 ${(p) => (p.$bar ? 12 : 0)}px;
  border-left: ${(p) => (p.$bar ? '2px solid #8b8e93' : 'none')};
  line-height: 28px;
`;

const CommandLine = styled.div`
  position: absolute;
  left: 1000px;
  bottom: 2px;
  width: 1000px;
  height: 50px;
  display: flex;
  align-items: center;
  padding: 0 18px 0 16px;
  background: #353e4c;
  font-family: "Open Sans", sans-serif;
  font-style: italic;
  font-size: 22px;
  color: #8d9299;
`;

const CommandPrompt = styled.span`
  width: 74px;
  display: flex;
  align-items: center;
  gap: 4px;
  flex: none;
`;

const CommandText = styled.span`
  flex: 1;
`;

const MiniTriangle = styled.span<{ $up?: boolean }>`
  width: 0;
  height: 0;
  border-left: 6px solid transparent;
  border-right: 6px solid transparent;
  ${(p) => (p.$up ? 'border-bottom: 11px solid #8f9399;' : 'border-top: 11px solid #8f9399;')}
  margin-right: ${(p) => (p.$up ? 28 : 0)}px;
`;

const RightPanel = styled.aside`
  width: 473px;
  flex: none;
  display: flex;
  flex-direction: column;
  background: #353d4b;
`;

const PaletteTabs = styled.div`
  height: 46px;
  flex: none;
  display: flex;
  gap: 2px;
`;

const PaletteTab = styled.div<{ $active?: boolean; $w?: number }>`
  width: ${(p) => p.$w || 103}px;
  display: flex;
  align-items: center;
  justify-content: center;
  position: relative;
  color: #8f949b;
  font-size: 22px;
  background: ${(p) => (p.$active ? '#353d4b' : '#2c333e')};
  border-bottom: 2px solid ${(p) => (p.$active ? '#353d4b' : '#21262d')};
`;

const Badge = styled.span`
  position: absolute;
  top: 0;
  left: 66px;
  width: 18px;
  height: 16px;
  border-radius: 50%;
  background: #e8693c;
  border: 2px solid #ffffff;
`;

const PanelHead = styled.div`
  height: 33px;
  display: flex;
  align-items: center;
  justify-content: space-between;
  padding: 0 20px 0 22px;
  font-size: 23.5px;
  color: #e4e6e8;
`;

const LayerTools = styled.div`
  height: 46px;
  margin-top: 26px;
  display: flex;
  align-items: center;
  gap: 16px;
  padding-left: 29px;
`;

const LayerCombo = styled.div`
  width: 437px;
  height: 49px;
  margin: 16px 0 0 20px;
  display: flex;
  align-items: center;
  padding: 0 4px 0 20px;
  background: #424d5f;
  border: 2px solid #2b323c;
  border-radius: 4px;
  font-size: 23.5px;
  color: #eeeeee;
`;

const StateCombo = styled(LayerCombo)`
  width: 432px;
  height: 50px;
  margin: 7px 0 0 23px;
  padding-left: 12px;
  justify-content: space-between;
`;

const Dot = styled.span<{ $dim?: boolean }>`
  width: 16px;
  height: 16px;
  border-radius: 50%;
  background: ${(p) => (p.$dim ? '#5f6878' : '#d2d2d2')};
  flex: none;
`;

const Swatch = styled.span`
  width: 18px;
  height: 16px;
  background: #ffffff;
  border: 2px solid #000000;
  flex: none;
`;

const ColorSwatch = styled(Swatch)`
  margin: 0 5px;
`;

const ComboIcons = styled.div`
  display: flex;
  align-items: center;
  gap: 18px;
  flex: 1;
`;

const ComboValue = styled.span`
  margin-left: -4px;
`;

const HideRow = styled.div`
  height: 54px;
  display: flex;
  align-items: center;
  padding-left: 30px;
  gap: 22px;
  font-size: 23.5px;
  color: #a7abb1;
`;

const LayerTable = styled.div`
  width: 430px;
  height: 281px;
  margin: 3px 0 0 23px;
  display: flex;
  flex-direction: column;
  background: #2d343f;
`;

const TableHead = styled.div`
  height: 47px;
  flex: none;
  display: flex;
  gap: 2px;
`;

const HeadCell = styled.div<{ $w: number; $active?: boolean; $pl?: number }>`
  width: ${(p) => p.$w}px;
  flex: none;
  display: flex;
  align-items: center;
  justify-content: center;
  position: relative;
  gap: 12px;
  padding-left: ${(p) => p.$pl || 0}px;
  font-size: 23px;
  font-weight: 700;
  color: #cfd2d6;
  background: ${(p) => (p.$active ? '#414c5e' : '#2a303a')};
`;

const SortMark = styled.span`
  position: absolute;
  left: 50%;
  bottom: 0;
  margin-left: -6px;
  border-left: 6px solid transparent;
  border-right: 6px solid transparent;
  border-bottom: 7px solid #3d8ce0;
`;

const TableBody = styled.div`
  height: 203px;
  flex: none;
  margin-left: 4px;
  background: #424d5f;
  padding-top: 2px;
`;

const TableRow = styled.div<{ $selected?: boolean }>`
  height: 38px;
  display: grid;
  grid-template-columns: 60px 37px 182px 94px 1fr;
  align-items: center;
  font-size: 23.5px;
  color: #eef0f2;
  background: ${(p) => (p.$selected ? '#8494a8' : 'transparent')};
`;

const RowDot = styled(Dot)`
  margin-left: 26px;
`;

const RowLine = styled.span`
  height: 2px;
  background: #ffffff;
`;

const ScrollTrack = styled.div`
  flex: 1;
  display: flex;
  align-items: center;
  padding-left: 4px;
`;

const ScrollThumb = styled.div`
  width: 351px;
  height: 9px;
  border-radius: 5px;
  background: #7f8792;
`;

const LayerFoot = styled.div`
  height: 53px;
  display: flex;
  align-items: center;
  gap: 28px;
  padding: 0 25px 0 35px;
`;

const FootDash = styled.span`
  width: 16px;
  height: 3px;
  background: #767c85;
  margin-left: auto;
`;

const FootColumns = styled.span`
  display: flex;
  align-items: center;
  gap: 8px;
  margin-left: 8px;
`;

const SearchBox = styled.div`
  width: 428px;
  height: 41px;
  margin-left: 23px;
  display: flex;
  align-items: center;
  gap: 4px;
  padding-left: 9px;
  background: #ffffff;
  border-radius: 13px;
  font-size: 26.5px;
  color: #bcbcbc;
  flex: none;
`;

const PanelRule = styled.div`
  height: 2px;
  margin-top: 17px;
  flex: none;
  background: #232830;
`;

const PropsHead = styled(PanelHead)`
  height: 30px;
  margin-top: 1px;
  padding-right: 20px;
`;

const Segments = styled.div`
  margin-left: auto;
  width: 119px;
  height: 26px;
  display: flex;
  border: 2px solid #272d36;
  border-radius: 2px;
  font-size: 15px;
  font-weight: 700;
`;

const Segment = styled.span<{ $on?: boolean }>`
  flex: 1;
  display: flex;
  align-items: center;
  justify-content: center;
  color: ${(p) => (p.$on ? '#e4e6e8' : '#7f848b')};
  background: ${(p) => (p.$on ? '#414c5e' : '#2c323c')};
`;

const PropsIcons = styled.div`
  display: flex;
  gap: 22px;
  margin-left: 20px;
`;

const SpaceCombo = styled.div`
  width: 428px;
  height: 40px;
  margin: 17px 0 9px 23px;
  display: flex;
  align-items: center;
  justify-content: space-between;
  padding: 0 14px;
  background: #3c4554;
  border-radius: 3px;
  font-size: 23.5px;
  color: #6f7783;
  flex: none;
`;

const PropRow = styled.div`
  height: 46px;
  display: flex;
  align-items: center;
  padding-left: 68px;
`;

const PropLabel = styled.span<{ $long?: boolean }>`
  width: 142px;
  margin-right: 20px;
  flex: none;
  white-space: nowrap;
  text-align: ${(p) => (p.$long ? 'left' : 'right')};
  font-size: 23.5px;
  color: #b6b9be;
`;

const Field = styled.div<{ $kind?: string; $w?: number }>`
  width: ${(p) => p.$w || 215}px;
  height: 36px;
  flex: none;
  display: flex;
  align-items: center;
  padding: 0 5px 0 ${(p) => (p.$kind === 'icon' ? 2 : 12)}px;
  gap: 16px;
  border-radius: 3px;
  font-size: 23.5px;
  color: ${(p) => (p.$kind === 'disabled' ? '#69717d' : '#eef0f2')};
  background: ${(p) => (p.$kind === 'disabled' ? '#3a4351' : '#424d5f')};
  border: 2px solid ${(p) => (p.$kind === 'disabled' ? 'transparent' : '#2b323c')};
  justify-content: space-between;
`;

const FieldValue = styled.span<{ $end?: boolean }>`
  flex: 1;
  white-space: nowrap;
  text-align: ${(p) => (p.$end ? 'right' : 'left')};
`;

const FieldPair = styled.div`
  width: 215px;
  display: flex;
  justify-content: space-between;
`;

const Track = styled(Field)`
  position: relative;
  padding-right: 4px;
  margin-left: 6px;
`;

const TrackTick = styled.span`
  position: absolute;
  left: 58px;
  bottom: 3px;
  width: 1px;
  height: 8px;
  background: #8a919b;
`;

const TrackStop = styled.span`
  position: absolute;
  left: -1px;
  top: 1px;
  bottom: 1px;
  width: 3px;
  background: #2f7fd8;
`;

const StatusBar = styled.div`
  height: 44px;
  flex: none;
  display: flex;
  margin: 0 0 2px 0;
  background: #343c4a;
`;

const LayoutTabs = styled.div`
  flex: 1;
  display: flex;
  gap: 2px;
  padding-left: 2px;
`;

const LayoutTab = styled.div<{ $active?: boolean; $w: number }>`
  width: ${(p) => p.$w}px;
  display: flex;
  align-items: center;
  justify-content: center;
  font-size: 21px;
  font-weight: ${(p) => (p.$active ? 700 : 400)};
  color: ${(p) => (p.$active ? '#f2f2f2' : '#a6aab0')};
  background: ${(p) => (p.$active ? '#414d60' : '#323a47')};
`;

const LayoutFill = styled.div`
  flex: 1;
  background: #323a47;
`;

const StatusRight = styled.div`
  width: 1030px;
  flex: none;
  display: flex;
  align-items: center;
  border-left: 2px solid #20252d;
  padding-left: 12px;
`;

const Coordinates = styled.span`
  width: 294px;
  flex: none;
  font-size: 23.5px;
  white-space: nowrap;
  color: #a9abae;
`;

const StatusButtons = styled.div`
  display: flex;
  gap: 4px;
`;

const StatusBtn = styled.div<{ $on?: boolean }>`
  width: 40px;
  height: 40px;
  display: flex;
  align-items: center;
  justify-content: center;
  background: ${(p) => (p.$on ? '#5b84b3' : 'transparent')};
`;

const Scale = styled.span`
  display: flex;
  align-items: center;
  gap: 6px;
  margin-left: 2px;
  font-size: 22px;
  color: #a9abae;
`;

const StatusEnd = styled.div`
  display: flex;
  align-items: center;
  gap: 10px;
  margin-left: 12px;
`;

const GearIcon = styled.span`
  display: flex;
  color: #d4d4d4;
  font-size: 30px;
`;

const dash = { fill: 'none', stroke: '#e6e6e6' };

const Arrow = ({ tip, base, at, vertical }: { tip: number; base: number; at: number; vertical?: boolean }) => (
  <polygon
    points={vertical ? `${at},${tip} ${at - 10.5},${base} ${at + 10.5},${base}` : `${tip},${at} ${base},${at - 10.5} ${base},${at + 10.5}`}
    fill="#ffffff"
  />
);

const DimText = ({ x, y, rotate, children }: { x: number; y: number; rotate?: boolean; children: string }) => (
  <text
    transform={`translate(${x} ${y})${rotate ? ' rotate(-90)' : ''}`}
    textAnchor="middle"
    fontSize={76}
    fill="#ffffff"
    fontFamily="Liberation Sans, Arial, sans-serif"
  >
    {children}
  </text>
);

const Part = () => (
  <g>
    <g {...dash} strokeWidth={1.4}>
      <polygon points="1574,681.5 1247,1008 1247,1471 1574,1798 2037,1798 2364,1471 2364,1008 2037,681.5" />
      <polygon points="1806,769 2274.5,1110 2095,1659 1516,1659 1338,1110" />
      <polygon points="1632,939 1979,939 2153,1240 1979,1541 1632,1541 1458,1240" />
      <rect x="1574" y="357" width="463" height="324.5" />
    </g>
    <path d="M1806 311V1845" stroke="#e0e0e0" strokeWidth={1.3} strokeDasharray="112 12 30 12" strokeDashoffset={38} fill="none" />
    <path d="M1200 1240H2411" stroke="#d4d4d4" strokeWidth={2} strokeDasharray="115 12 30 12" strokeDashoffset={35} fill="none" />
  </g>
);

const Dimensions = () => (
  <g>
    <g stroke="#e6e6e6" strokeWidth={1.3} fill="none">
      <path d="M1574 210V343M2037 210V343M2178 357V681.5M2600 939V1541M2406 1544V1914M1516 1674V2020M2095 1674V2020" />
    </g>
    <g stroke="#d8d8d8" strokeWidth={2} fill="none">
      <path d="M1632 240H1979M2051 357H2207M2051 681.5H2207M1993 939H2630M1993 1541H2630M2109 1659H2434M2051 1798H2434M1574 1984H2037" />
      <path d="M1574 357H2037M1574 681.5H2037M1632 939H1979M1632 1541H1979M1516 1659H2095M1574 1798H2037" />
    </g>
    <Arrow tip={1574} base={1632} at={240} />
    <Arrow tip={2037} base={1979} at={240} />
    <Arrow tip={357} base={416} at={2178} vertical />
    <Arrow tip={681.5} base={623} at={2178} vertical />
    <Arrow tip={939} base={998} at={2600} vertical />
    <Arrow tip={1541} base={1483} at={2600} vertical />
    <Arrow tip={1659} base={1601} at={2406} vertical />
    <Arrow tip={1798} base={1857} at={2406} vertical />
    <Arrow tip={1516} base={1574} at={1984} />
    <Arrow tip={2095} base={2037} at={1984} />
    <DimText x={1804} y={224}>20</DimText>
    <DimText x={2161} y={521} rotate>14</DimText>
    <DimText x={2583} y={1240} rotate>26</DimText>
    <DimText x={2389} y={1730} rotate>6</DimText>
    <DimText x={1804} y={1966}>25</DimText>
    <text x={2280} y={771} fontSize={76} fill="#ffffff" fontFamily="Liberation Sans, Arial, sans-serif" textLength={852}>
      Made by Fazkullin Farid
    </text>
  </g>
);

const Compass = () => (
  <g fontFamily="Liberation Sans, Arial, sans-serif" textAnchor="middle">
    <circle cx="3204" cy="292" r="107.5" fill="none" stroke="#40464d" strokeWidth="29" />
    <rect x="3151" y="240" width="104" height="103" fill="#a1a3a7" />
    <rect x="3172" y="260" width="64" height="64" fill="#9298a0" />
    <text x="3204" y="301" fontSize="25" fontWeight="700" fill="#4a505a">TOP</text>
    <g fontSize="48" fontWeight="700" fill="#a0a2a5">
      <text x="3204" y="198">N</text>
      <text x="3091" y="309">W</text>
      <text x="3316" y="309">E</text>
      <text x="3204" y="422">S</text>
    </g>
    <rect x="3153" y="469" width="101" height="24" rx="10" fill="#656d76" />
    <text x="3187" y="489" fontSize="21" fill="#262b33">WCS</text>
    <path d="M3226 476H3244L3235 484Z" fill="#c6c9cd" />
  </g>
);

const Ucs = () => (
  <g fill="none" stroke="#cfcfcf">
    <path d="M415 1964V2065" strokeWidth={2} />
    <path d="M415 2065H514" strokeWidth={3} />
    <rect x="407" y="2054" width="18" height="19" strokeWidth={2} />
    <path d="M418 1930L430 1944L442 1930M430 1944V1955" strokeWidth={1.6} />
    <path d="M522 2036L548 2061M548 2036L522 2061" strokeWidth={1.6} />
  </g>
);

const Crosshair = () => (
  <g fill="none" stroke="#e0e0e0" strokeWidth={1.3}>
    <path d="M2984 1274H3177M3081 1179V1370" />
    <rect x="3075" y="1268" width="12" height="12" />
  </g>
);

const CanvasArea = () => (
  <Canvas>
    <GridLayer $step={231.4} $x={182} $y={142} $c="#252a32" />
    <GridLayer $step={1157} $x={1107} $y={373} $c="#2b3038" />
    <DrawingSvg viewBox="368 128 2999 1986">
      <defs>
        <linearGradient id="hatchGrad" x1="0" y1="0" x2="0" y2="1">
          <stop offset="0" stopColor="#78bcf5" />
          <stop offset="1" stopColor="#2c3340" />
        </linearGradient>
      </defs>
      <Part />
      <Dimensions />
      <Compass />
      <Ucs />
      <Crosshair />
    </DrawingSvg>
    <ViewLabel>
      <ViewItem>+</ViewItem>
      <ViewItem $bar>Top</ViewItem>
      <ViewItem $bar>2D Wireframe</ViewItem>
    </ViewLabel>
    <CommandLine>
      <CommandPrompt>
        <Ico viewBox="0 0 32 32" $s={24}>{Ln('M2 6L12 12L2 18M12 26H26', '#999', 2.5)}</Ico>
        <MiniTriangle />
      </CommandPrompt>
      <CommandText>Type a command</CommandText>
      <MiniTriangle $up />
      <Ico viewBox="0 0 32 32" $s={28}>{Ln('M3 12H29V30H3ZM12 12V30', '#cfcfcf', 2.5)}{Ln('M17 22V6', BL, 2)}{Fi('M12 8L17 0L22 8Z', BL)}</Ico>
    </CommandLine>
  </Canvas>
);

const Ribbon = ({ title, pad, items }: { title: string; pad: number; items: (string | undefined)[][] }) => (
  <RibbonSection $pad={pad}>
    <RibbonHead>
      <Caret />
      <RibbonTitle>{title}</RibbonTitle>
      <GearWrap><FaCog /></GearWrap>
    </RibbonHead>
    <RibbonGrid>
      {items.map((it, i) => {
        const lg = it.includes(LG);
        return (
          <ToolCell key={i} $lg={lg} $fly={it.includes(FLY)}>
            {it[0] !== 'blank' && (
              <Ico viewBox={lg ? '0 0 64 64' : '0 0 32 32'} $s={lg ? 64 : 32}>
                {ribbon[it[0] as string]}
              </Ico>
            )}
          </ToolCell>
        );
      })}
    </RibbonGrid>
  </RibbonSection>
);

const LeftPanel = () => (
  <LeftColumn>
    <WorkspaceTabs>
      <WorkspaceTab $active>Drafting</WorkspaceTab>
      <WorkspaceTab>Modeling</WorkspaceTab>
      <CollapseTab>«</CollapseTab>
    </WorkspaceTabs>
    {sections.map((s) => (
      <Ribbon key={s.title} title={s.title} pad={s.pad} items={s.items as (string | undefined)[][]} />
    ))}
    <LeftFooter>
      <Ico viewBox="0 0 32 32" $s={26}>{Ln('M16 2V30M2 16H30', GR, 2)}</Ico>
      <Ico viewBox="0 0 32 32" $s={26}>{Ln('M8 4H30M8 28H30', GR, 3)}{Bx(2, 12, 20, 8)}{Fi('M25 20H31L28 14Z')}</Ico>
    </LeftFooter>
  </LeftColumn>
);

const ExitIcon = () => (
  <Ico viewBox="0 0 24 24" $s={24}>{Ln('M9 6V2H22V22H9V18', '#e0e0e0', 2)}{Ln('M2 12H14', '#e0e0e0', 2)}{Fi('M0 12L7 7V17Z', '#e0e0e0')}</Ico>
);

const LayersPanel = () => (
  <>
    <PanelHead>
      Layers
      <ExitIcon />
    </PanelHead>
    <LayerTools>
      {layerIcons.map((el, i) => (
        <Ico key={i} viewBox="0 0 32 32">{el}</Ico>
      ))}
    </LayerTools>
    <LayerCombo>
      <ComboIcons>
        <Dot />
        <Ico viewBox="0 0 24 24" $s={20}>{Bx(3, 10, 18, 14, '#5f6878')}{Ln('M7 10V6A5 5 0 0 1 17 6V10', '#5f6878', 3)}</Ico>
        <Ico viewBox="0 0 32 32" $s={20}>{Ln('M2 16H30M16 2V30M6 6L26 26M26 6L6 26', '#5f6878', 3)}</Ico>
        <Swatch />
        <ComboValue>0</ComboValue>
      </ComboIcons>
      <Caret $c="#c8cbd0" />
    </LayerCombo>
    <StateCombo>
      Unsaved Layer State
      <Caret $c="#c8cbd0" />
    </StateCombo>
    <HideRow>
      <Ico viewBox="0 0 24 24" $s={18}>{Ln('M2 8L12 18L22 8', '#a7abb1', 3)}</Ico>
      Hide Layer List
    </HideRow>
    <LayerTable>
      <TableHead>
        <HeadCell $w={65}>
          <Ico viewBox="0 0 32 32" $s={24}>{Ln('M2 16C10 6 22 6 30 16C22 26 10 26 2 16Z', GR, 2.5)}{Rg(16, 16, 4, GR, 2, GR)}</Ico>
        </HeadCell>
        <HeadCell $w={114} $active>
          <Ico viewBox="0 0 24 24" $s={20}>{Ln('M2 4H22V20H2Z', GR, 2)}{Fi('M4 18L20 6V18Z')}</Ico>
          N...
          <Ico viewBox="0 0 12 20" $s={18}>{Fi('M0 8L6 0L12 8ZM0 12L6 20L12 12Z')}</Ico>
          <SortMark />
        </HeadCell>
        <HeadCell $w={42}>
          <Ico viewBox="0 0 32 32" $s={22}>{Rg(16, 16, 10, GR, 3)}{Ln('M2 16H30M16 2V30M6 6L26 26M26 6L6 26', GR, 2.5)}</Ico>
        </HeadCell>
        <HeadCell $w={42}>
          <Ico viewBox="0 0 24 24" $s={20}>{Bx(3, 11, 18, 13)}{Ln('M7 11V7A5 5 0 0 1 17 7V11', GR, 3)}</Ico>
        </HeadCell>
        <HeadCell $w={92}>
          <Ico viewBox="0 0 24 24" $s={22}>{Ln('M2 5H22M2 12H22M2 19H22', GR, 2)}</Ico>
        </HeadCell>
        <HeadCell $w={65} $pl={22}>
          <Ico viewBox="0 0 24 24" $s={20}>{Ln('M2 5H22M2 19H22', GR, 2)}<path d="M2 12H22" stroke={GR} strokeWidth="2" strokeDasharray="3 2" /></Ico>
        </HeadCell>
      </TableHead>
      <TableBody>
        {layerRows.map((row) => (
          <TableRow key={row.name} $selected={row.selected}>
            <RowDot />
            <Swatch />
            <span>{row.name}</span>
            <span>De...</span>
            <RowLine />
          </TableRow>
        ))}
      </TableBody>
      <ScrollTrack>
        <ScrollThumb />
      </ScrollTrack>
    </LayerTable>
    <LayerFoot>
      <Ico viewBox="0 0 32 32">{Ln('M8 4H30L22 10H2ZM6 16L2 20H22L30 12M6 24L2 28H22L30 20', '#aeb1b5', 1.5)}</Ico>
      <Ico viewBox="0 0 32 32">{Ln('M8 2H28L22 8H2ZM2 14H14M2 20H10', '#cfcfcf', 2)}{Ln('M12 14H32V28H12Z', '#cfcfcf', 2)}{Ln('M16 19H18M20 19H28M16 24H18M20 24H28', '#cfcfcf', 1.5)}</Ico>
      <Ico viewBox="0 0 32 32">{Fi('M1 4H12L15 8H26V11H8L5 26H1Z')}{Fi('M7 13H32L26 28H2Z')}</Ico>
      <Ico viewBox="0 0 32 32">{Fi('M1 4H12L15 8H26V11H8L5 26H1Z')}{Fi('M7 13H32L26 28H2Z')}{Fi('M18 15L12 22H17L14 27L23 19H18L21 15Z', '#353d4b')}</Ico>
      <FootDash />
      <FootColumns>
        <Ico viewBox="0 0 32 20" $s={28}>{Ln('M1 3H31V18H1ZM11 3V18M21 3V18', GR, 2.5)}</Ico>
        <Caret $c={GR} />
      </FootColumns>
    </LayerFoot>
    <SearchBox>
      <Ico viewBox="0 0 32 32" $s={26}>{Rg(13, 13, 10, '#222', 2.5)}{Ln('M20 20L30 28', '#222', 3)}</Ico>
      <Ico viewBox="0 0 16 16" $s={12}>{Ln('M1 5L8 12L15 5', '#222', 2.5)}</Ico>
      Search for layer
    </SearchBox>
    <PanelRule />
  </>
);

const PropControl = ({ kind, value }: { kind: string; value?: string }) => {
  if (kind === 'transparency') {
    return (
      <FieldPair>
        <Track $w={124}>
          <TrackStop />
          <TrackTick />
          <FieldValue $end>{value}</FieldValue>
        </Track>
        <Field $w={75}>
          <Ico viewBox="0 0 32 32" $s={24}>{Fi('M8 4H30L24 12H2Z', BL)}{Ln('M2 18H24L30 12M2 24H24L30 18', GR, 2)}</Ico>
          <Caret $c="#c8cbd0" />
        </Field>
      </FieldPair>
    );
  }
  if (kind === 'height') {
    return (
      <FieldPair>
        <Field $w={170}>
          <FieldValue>{value}</FieldValue>
        </Field>
        <Field $w={38} $kind="icon">
          <Ico viewBox="0 0 32 32" $s={30}>{Ln('M2 2V24M30 2V14', GR, 2)}{Ln('M6 6H26', BL, 1.5)}{Ln('M14 24H32M23 16V32', GR, 2)}{Rg(23, 24, 4, GR, 2)}</Ico>
        </Field>
      </FieldPair>
    );
  }
  if (kind === 'input' || kind === 'disabled') {
    return (
      <Field $kind={kind}>
        <FieldValue>{value}</FieldValue>
      </Field>
    );
  }
  return (
    <Field>
      {kind === 'color' && <ColorSwatch />}
      {kind === 'linetype' && <Ico viewBox="0 0 64 4" $s={64} style={{ height: 4 }}>{Bx(0, 1, 64, 2, WH)}</Ico>}
      <FieldValue $end={kind === 'linetype'}>{value}</FieldValue>
      <Caret $c="#d8dadd" />
    </Field>
  );
};

const PropertiesPanel = () => (
  <>
    <PropsHead>
      Properties
      <Segments>
        <Segment>All</Segment>
        <Segment $on>My</Segment>
      </Segments>
      <PropsIcons>
        <Ico viewBox="0 0 32 32" $s={28}>{Ln('M1 1H25V22H1Z', GR, 2)}{Ln('M4 6H20M4 11H18M4 16H12', GR, 1.5)}{Fi('M12 28L26 14L32 20L18 32H12Z')}</Ico>
        <ExitIcon />
      </PropsIcons>
    </PropsHead>
    <SpaceCombo>
      Model Space
      <Caret $c="#5e6673" />
    </SpaceCombo>
    {propertyRows.map((row) => (
      <PropRow key={row.label}>
        <PropLabel $long={row.long}>{row.label}</PropLabel>
        <PropControl kind={row.kind} value={row.value} />
      </PropRow>
    ))}
  </>
);

const App: React.FC = () => (
  <Page>
    <GlobalStyle />
    <TopBar>
      {top.map((group, g) => (
        <ToolGroup key={g}>
          {group.map((el, i) => (
            <Ico key={i} viewBox="0 0 32 32">{el}</Ico>
          ))}
        </ToolGroup>
      ))}
    </TopBar>
    <Body>
      <LeftPanel />
      <Main>
        <MainUpper>
          <Center>
            <DocTabs>
              <DocButton>
                <Ico viewBox="0 0 32 32" $s={30}>{Bx(0, 0, 14, 18, BL)}{Bx(17, 0, 14, 14)}{Bx(0, 21, 14, 11)}{Bx(17, 17, 14, 15)}</Ico>
              </DocButton>
              <DocButton>
                <Ico viewBox="0 0 32 32" $s={30}>{Ln('M16 0V32M0 16H32', GR, 2)}</Ico>
              </DocButton>
              <DocTab $w={340}>FazkullinFari...eek1_l2_p3*</DocTab>
              <DocTab $w={338}>FazkullinFari...Week2_l1_p3</DocTab>
              <DocTab $w={346} $active>FazkullinFari...eek2_l1_p2*</DocTab>
              <DocTab />
            </DocTabs>
            <CanvasArea />
          </Center>
          <RightPanel>
            <PaletteTabs>
              <PaletteTab $active>
                <Ico viewBox="0 0 32 32">{Fi('M8 2H28L22 8H2Z')}{Fi('M8 10H24L18 16H2Z')}{Fi('M6 18H14L10 22H2Z')}{Rg(24, 22, 8, WH, 1, GR)}{Tx(22, 28, 'i', 14, '#353d4b')}</Ico>
              </PaletteTab>
              <PaletteTab>
                <Ico viewBox="0 0 32 32">{Ln('M8 24V8A4 4 0 0 1 16 8V18', GR, 2)}{Fi('M6 14H22L26 10H32V30H6Z')}</Ico>
              </PaletteTab>
              <PaletteTab>
                <Ico viewBox="0 0 32 32">{Bx(2, 4, 28, 26)}{Bx(6, 12, 6, 4, '#2c333e')}{Bx(14, 12, 6, 4, '#2c333e')}{Bx(22, 12, 6, 4, '#2c333e')}{Bx(6, 20, 6, 4, '#2c333e')}{Bx(14, 20, 6, 4, '#2c333e')}{Bx(22, 20, 6, 4, '#2c333e')}</Ico>
                <Badge />
              </PaletteTab>
              <PaletteTab $w={107} />
              <PaletteTab $w={50} $active>»</PaletteTab>
            </PaletteTabs>
            <LayersPanel />
            <PropertiesPanel />
          </RightPanel>
        </MainUpper>
        <StatusBar>
          <LayoutTabs>
            <LayoutTab $w={118} $active>Model</LayoutTab>
            <LayoutTab $w={44}>
              <Ico viewBox="0 0 32 32" $s={24}>{Ln('M16 2V30M2 16H30', GR, 2)}</Ico>
            </LayoutTab>
            <LayoutTab $w={116}>Layout1</LayoutTab>
            <LayoutTab $w={116}>Layout2</LayoutTab>
            <LayoutFill />
          </LayoutTabs>
          <StatusRight>
            <Coordinates>119.2724, 66.5677 , 0.0000</Coordinates>
            <StatusButtons>
              {statusIcons.map((s, i) => (
                <StatusBtn key={i} $on={s.on}>
                  <Ico viewBox="0 0 32 32" $s={30}>{s.el}</Ico>
                </StatusBtn>
              ))}
            </StatusButtons>
            <Scale>
              1:1
              <MiniTriangle />
            </Scale>
            <StatusEnd>
              <Ico viewBox="0 0 32 32">{Ln('M8 1H20V14H8ZM5 31L13 18L21 31Z', GR, 2)}{Rg(25, 20, 6, GR, 2)}</Ico>
              <GearIcon><FaCog /></GearIcon>
            </StatusEnd>
          </StatusRight>
        </StatusBar>
      </Main>
    </Body>
  </Page>
);

export default App;
